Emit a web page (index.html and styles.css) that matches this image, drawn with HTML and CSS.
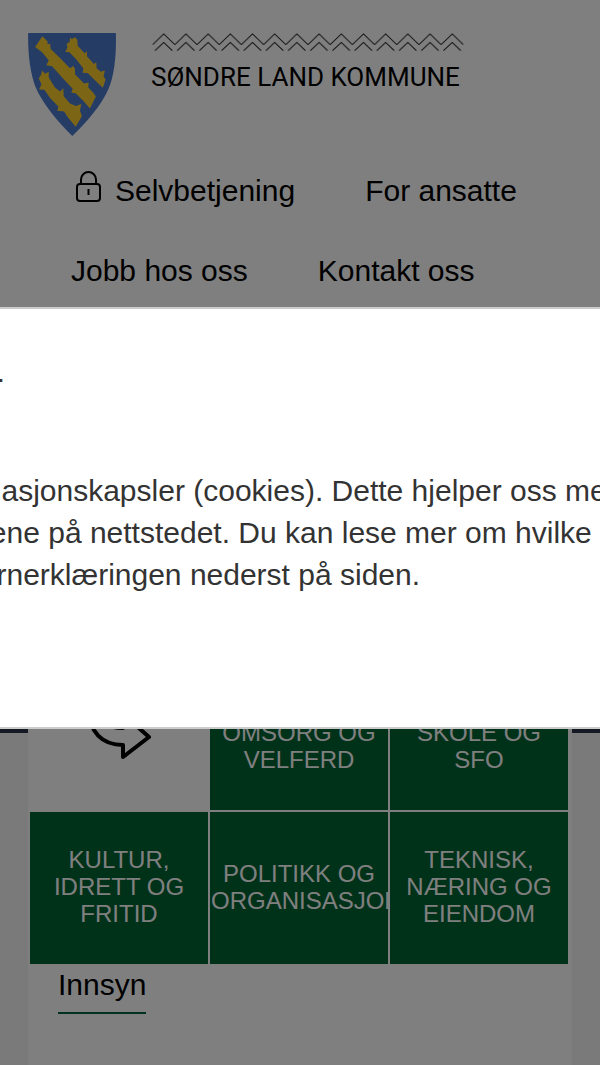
FILE: index.html
```html
<!DOCTYPE html>
<html lang="no">
<head>
    <meta charset="UTF-8">
    <meta name="viewport" content="width=device-width, initial-scale=1.0">
    <title>Søndre Land kommune</title>
    <link rel="stylesheet" href="styles.css">
</head>
<body>
    <header>
        <a class="logo" href="#" aria-label="Søndre Land kommune">
            <svg class="crest" viewBox="24 38 264 310" aria-hidden="true">
                <path fill="#4b79cb" d="M24 38H288C290 100 284 165 266 206C244 256 204 302 157 348C110 302 68 252 46 200C30 160 23 100 24 38Z"/>
                <g fill="#f8cb2b">
                    <path d="M67 48L83 64L82 72L90 70L92 86L120 113L150 144L160 137L165 146L165 162L192 190L206 187L205 202L220 218L228 229L210 265L192 244L167 219L154 218L158 206L127 173L96 138L79 135L86 120L66 96L45 80Z"/>
                    <path d="M150 52L156 56L165 51L172 58L173 76L194 99L201 93L201 108L222 131L229 126L230 144L243 155L255 150L251 168L257 178L249 203L225 180L204 159L188 158L190 144L168 116L148 96L136 95L142 82L140 70L149 65Z"/>
                    <path d="M66 151L75 161L86 155L86 172L104 201L120 214L130 204L131 228L150 250L168 258L184 252L180 272L186 288L167 320L144 292L132 274L112 272L115 259L90 234L73 209L57 208L64 192L56 175L63 164Z"/>
                </g>
            </svg>
            <span class="logo-text">
                <svg class="zigzag" viewBox="0 0 932 54" aria-hidden="true">
                    <defs>
                        <pattern id="peaks" width="66.57" height="54" patternUnits="userSpaceOnUse">
                            <path d="M0 35L33.3 3L66.6 35M7 53L33.3 28L59 53" fill="none" stroke="#222" stroke-width="3"/>
                        </pattern>
                    </defs>
                    <rect width="932" height="54" fill="url(#peaks)"/>
                </svg>
                <span class="logo-name">SØNDRE LAND KOMMUNE</span>
            </span>
        </a>

        <nav>
            <a href="#" class="login">
                <svg class="lock" viewBox="0 0 26 34" fill="none" stroke="#000" stroke-width="2" aria-hidden="true">
                    <rect x="2" y="14" width="23" height="17" rx="3"/>
                    <path d="M6 14V9.500a7.500 7.500 0 0 1 15 0v4.500M13.500 19v6"/>
                </svg>
                Selvbetjening
            </a>
            <a href="#">For ansatte</a>
            <a href="#">Jobb hos oss</a>
            <a href="#">Kontakt oss</a>
        </nav>
    </header>

    <div class="hero"></div>

    <main>
        <div class="content">
            <div class="tiles">
                <a href="#" class="tile tile-icon" aria-label="Tjenester">
                    <svg viewBox="0 0 64 56" fill="none" stroke="#000" stroke-width="4" stroke-linejoin="round" aria-hidden="true">
                        <path d="M2 4C2 27 15 40 36 40V52L62 32L36 9V23C22 23 8 18 2 4Z"/>
                    </svg>
                </a>
                <a href="#" class="tile">HELSE,<br>OMSORG OG<br>VELFERD</a>
                <a href="#" class="tile">OPPVEKST,<br>SKOLE OG<br>SFO</a>
                <a href="#" class="tile">KULTUR,<br>IDRETT OG<br>FRITID</a>
                <a href="#" class="tile">POLITIKK OG<br>ORGANISASJON</a>
                <a href="#" class="tile">TEKNISK,<br>NÆRING OG<br>EIENDOM</a>
            </div>
            <a href="#" class="innsyn">Innsyn</a>
        </div>
    </main>

    <div class="overlay">
        <div class="cookie-dialog" role="dialog" aria-labelledby="cookie-title">
            <div class="cookie-body">
                <h2 id="cookie-title">Informasjonskapsler.</h2>
                <p>
                    Siden lagrer informasjonskapsler (cookies). Dette hjelper oss med<br>
                    for å bedre tjenestene på nettstedet. Du kan lese mer om hvilke<br>
                    cookies i personvernerklæringen nederst på siden.
                </p>
            </div>
        </div>
    </div>
</body>
</html>
```
FILE: styles.css
```css
* {
    box-sizing: border-box;
}
body {
    font-family: "Liberation Sans", Arial, sans-serif;
    font-size: 30px;
    line-height: 42px;
    margin: 0;
    min-height: 100vh;
    display: flex;
    flex-direction: column;
    background-color: #f4f4f4;
    color: #000;
}
a {
    color: inherit;
    text-decoration: none;
}
header {
    background-color: #fff;
    padding: 33px 28px 16px;
}
.logo {
    display: flex;
    gap: 35px;
}
.crest {
    width: 88px;
    height: 103px;
}
.logo-text {
    display: flex;
    flex-direction: column;
    gap: 10px;
}
.zigzag {
    width: 312px;
    height: 18px;
    margin-left: 1px;
}
.logo-name {
    font-family: Roboto, sans-serif;
    font-size: 26px;
    line-height: 32px;
    white-space: nowrap;
}
nav {
    display: flex;
    flex-wrap: wrap;
    gap: 38px 70px;
    padding: 34px 43px 0;
}
.login {
    display: flex;
    gap: 14px;
    padding-left: 4px;
}
.lock {
    width: 26px;
    height: 34px;
}
.hero {
    height: 425px;
    background-color: #2a3348;
}
main {
    flex: 1;
    display: flex;
    padding: 0 28px;
}
.content {
    flex: 1;
    min-width: 0;
    margin-top: -75px;
    background-color: #fff;
}
.tiles {
    display: grid;
    grid-template-columns: repeat(3, minmax(0, 1fr));
    grid-auto-rows: 152px;
    gap: 2px;
    padding: 0 4px 0 2px;
}
.tile {
    display: flex;
    flex-direction: column;
    justify-content: center;
    overflow: hidden;
    padding: 0 1px 3px;
    background-color: #006233;
    color: #fff;
    font-size: 24px;
    line-height: 27px;
    text-align: center;
}
.tile-icon {
    align-items: center;
    background-color: #fff;
}
.tile-icon svg {
    width: 64px;
    height: 56px;
}
.innsyn {
    display: inline-block;
    margin-left: 30px;
    padding-bottom: 6px;
    border-bottom: 2px solid #006240;
}

/* Cookies */
.overlay {
    position: fixed;
    top: 0;
    right: 0;
    bottom: 0;
    left: 0;
    background-color: rgba(0, 0, 0, 0.5);
}
.cookie-dialog {
    position: absolute;
    top: 307px;
    left: 0;
    right: 0;
    overflow: hidden;
    background-color: #fff;
    border-top: 2px solid #ccc;
    border-bottom: 2px solid #ccc;
    color: #333;
}
.cookie-body {
    margin-left: -252px;
    padding: 43px 0 131px;
    white-space: nowrap;
}
.cookie-body h2 {
    margin: 0 0 76px;
    font-size: 28px;
    font-weight: normal;
}
.cookie-body p {
    margin: 0;
}
```
